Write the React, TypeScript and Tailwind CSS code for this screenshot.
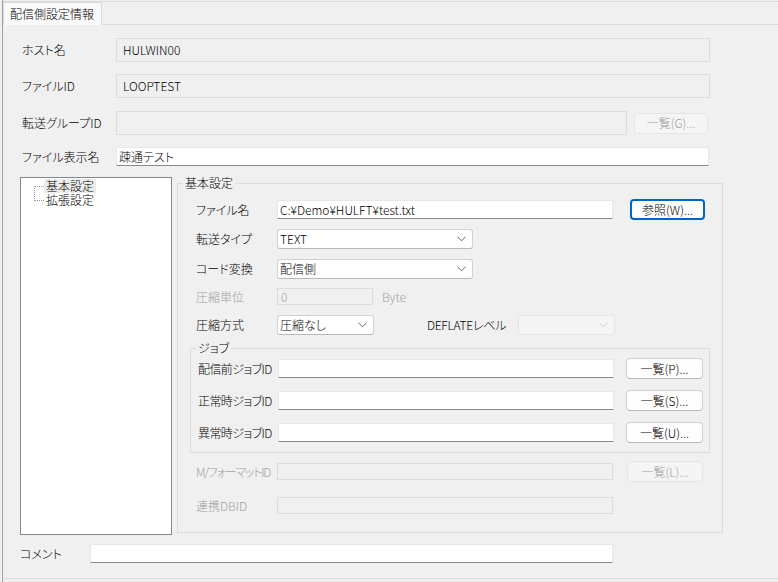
import type { ReactNode } from 'react'

interface FieldProps {
  value?: string
  w: string
  disabled?: boolean
}

// Edit box: white with dark bottom edge, or flat grey when disabled
function TextBox({ value = '', w, disabled = false }: FieldProps) {
  if (disabled) {
    return (
      <div className={`${w} h-[17px] shrink-0 bg-[#f0f0f0] border border-[#dcdcdc] pl-[3px] flex items-center text-[#a0a0a0] whitespace-nowrap`}>
        {value}
      </div>
    )
  }
  return (
    <div className={`${w} h-[19px] shrink-0 bg-white border border-[#e6e6e6] border-b-[#8a8a8a] rounded-t-[2px] pl-[2px] flex items-center whitespace-nowrap`}>
      {value}
    </div>
  )
}

function ReadOnlyBox({ value = '', w }: { value?: string; w: string }) {
  return (
    <div className={`${w} h-[24px] shrink-0 bg-[#f0f0f0] border border-[#dcdcdc] pl-[6px] flex items-center whitespace-nowrap`}>
      {value}
    </div>
  )
}

function Chevron({ disabled = false }: { disabled?: boolean }) {
  return (
    <svg width="9" height="6" viewBox="0 0 9 6" className="shrink-0">
      <polyline points="0.5,0.8 4.5,4.8 8.5,0.8" fill="none" stroke={disabled ? '#c8c8c8' : '#606060'} strokeWidth="1" />
    </svg>
  )
}

function Select({ value = '', w, disabled = false }: FieldProps) {
  return (
    <div
      className={`${w} h-[20px] shrink-0 rounded-[3px] border flex items-center justify-between pl-[2px] pr-[6px] whitespace-nowrap ${
        disabled ? 'bg-[#f5f5f5] border-[#e5e5e5]' : 'bg-white border-[#d0d0d0] border-b-[#b8b8b8]'
      }`}
    >
      <span>{value}</span>
      <Chevron disabled={disabled} />
    </div>
  )
}

interface BtnProps {
  children: ReactNode
  w: string
  disabled?: boolean
  focused?: boolean
}

function Btn({ children, w, disabled = false, focused = false }: BtnProps) {
  let tone = 'bg-[#fdfdfd] border border-[#d0d0d0] border-b-[#b5b5b5] text-black'
  if (focused) tone = 'bg-[#fdfdfd] border-2 border-[#0067c0] text-black'
  if (disabled) tone = 'bg-[#f5f5f5] border border-[#e5e5e5] text-[#a0a0a0]'
  return (
    <div className={`${w} h-[21px] rounded-[4px] flex items-center justify-center whitespace-nowrap shrink-0 ${tone}`}>
      {children}
    </div>
  )
}

function Label({ children, w, disabled = false }: { children: ReactNode; w: string; disabled?: boolean }) {
  return (
    <div className={`${w} shrink-0 whitespace-nowrap ${disabled ? 'text-[#a0a0a0]' : 'text-black'}`}>
      {children}
    </div>
  )
}

// Group box with caption sitting on the top border
function GroupBox({ title, className, children }: { title: string; className: string; children: ReactNode }) {
  return (
    <div className={`relative border border-[#dcdcdc] ${className}`}>
      <div className="absolute left-[5px] -top-[9px] px-[2px] bg-[#f0f0f0] leading-[16px]">{title}</div>
      {children}
    </div>
  )
}

function TreeView() {
  return (
    <div className="w-[152px] h-[358px] shrink-0 bg-white border border-[#828790] flex pl-[13px] pt-[1px]">
      <svg width="10" height="28" viewBox="0 0 10 28" className="shrink-0">
        <line x1="0.5" y1="7" x2="0.5" y2="22" stroke="#9a9a9a" strokeDasharray="1 1" />
        <line x1="1" y1="7.5" x2="10" y2="7.5" stroke="#9a9a9a" strokeDasharray="1 1" />
        <line x1="1" y1="21.5" x2="10" y2="21.5" stroke="#9a9a9a" strokeDasharray="1 1" />
      </svg>
      <div className="flex flex-col">
        <div className="h-[14px] px-[2px] bg-[#ececec] leading-[14px]">基本設定</div>
        <div className="h-[14px] px-[2px] leading-[14px]">拡張設定</div>
      </div>
    </div>
  )
}

export default function App() {
  return (
    <div className="w-[778px] h-[582px] overflow-hidden bg-[#f0f0f0] text-[12px] leading-[16px] font-light text-black font-['Noto_Sans_CJK_JP',sans-serif] [font-feature-settings:'palt']">
      <div className="ml-[2px] h-full border-l border-[#a0a0a0] flex flex-col">
        {/* Tab strip */}
        <div className="mt-[1px] h-[23px] border-t border-[#dadada] flex shrink-0">
          <div className="relative z-10 w-[99px] h-[23px] bg-[#f9f9f9] border-x border-t border-[#d9d9d9] pl-[6px] pt-[3px] whitespace-nowrap">
            配信側設定情報
          </div>
        </div>

        {/* Tab page */}
        <div className="h-[555px] border-t border-b border-[#dcdcdc] flex flex-col">
          <div className="mt-[13px] pl-[19px] flex items-center">
            <Label w="w-[94px]">ホスト名</Label>
            <ReadOnlyBox value="HULWIN00" w="w-[594px]" />
          </div>
          <div className="mt-[12px] pl-[19px] flex items-center">
            <Label w="w-[94px]">ファイルID</Label>
            <ReadOnlyBox value="LOOPTEST" w="w-[594px]" />
          </div>
          <div className="mt-[13px] pl-[19px] flex items-center">
            <Label w="w-[94px]">転送グループID</Label>
            <ReadOnlyBox w="w-[511px]" />
            <div className="ml-[7px]">
              <Btn w="w-[74px]" disabled>一覧(G)...</Btn>
            </div>
          </div>
          <div className="mt-[12px] pl-[19px] flex items-center">
            <Label w="w-[94px]">ファイル表示名</Label>
            <TextBox value="疎通テスト" w="w-[593px]" />
          </div>

          {/* Tree + settings */}
          <div className="mt-[11px] pl-[17px] flex items-start">
            <TreeView />
            <GroupBox title="基本設定" className="ml-[5px] mt-[6px] w-[546px] h-[350px]">
              <div className="mt-[15px] pl-[18px] h-[21px] flex items-center">
                <Label w="w-[81px]">ファイル名</Label>
                <TextBox value="C:¥Demo¥HULFT¥test.txt" w="w-[336px]" />
                <div className="ml-[17px]">
                  <Btn w="w-[75px]" focused>参照(W)...</Btn>
                </div>
              </div>
              <div className="mt-[9px] pl-[18px] flex items-center">
                <Label w="w-[81px]">転送タイプ</Label>
                <Select value="TEXT" w="w-[196px]" />
              </div>
              <div className="mt-[10px] pl-[18px] flex items-center">
                <Label w="w-[81px]">コード変換</Label>
                <Select value="配信側" w="w-[196px]" />
              </div>
              <div className="mt-[9px] pl-[18px] flex items-center">
                <Label w="w-[81px]" disabled>圧縮単位</Label>
                <TextBox value="0" w="w-[96px]" disabled />
                <div className="ml-[9px] text-[#a0a0a0]">Byte</div>
              </div>
              <div className="mt-[10px] pl-[18px] flex items-center">
                <Label w="w-[81px]">圧縮方式</Label>
                <Select value="圧縮なし" w="w-[97px]" />
                <Label w="w-[91px] ml-[53px] tracking-[-0.3px]">DEFLATEレベル</Label>
                <Select w="w-[97px]" disabled />
              </div>

              <GroupBox title="ジョブ" className="ml-[12px] mt-[13px] w-[520px] h-[105px]">
                <div className="mt-[9px] pl-[7px] flex items-center">
                  <Label w="w-[80px] tracking-[-0.6px]">配信前ジョブID</Label>
                  <TextBox w="w-[336px]" />
                  <div className="ml-[12px]">
                    <Btn w="w-[77px]">一覧(P)...</Btn>
                  </div>
                </div>
                <div className="mt-[11px] pl-[7px] flex items-center">
                  <Label w="w-[80px] tracking-[-0.6px]">正常時ジョブID</Label>
                  <TextBox w="w-[336px]" />
                  <div className="ml-[12px]">
                    <Btn w="w-[77px]">一覧(S)...</Btn>
                  </div>
                </div>
                <div className="mt-[11px] pl-[7px] flex items-center">
                  <Label w="w-[80px] tracking-[-0.6px]">異常時ジョブID</Label>
                  <TextBox w="w-[336px]" />
                  <div className="ml-[12px]">
                    <Btn w="w-[77px]">一覧(U)...</Btn>
                  </div>
                </div>
              </GroupBox>

              <div className="mt-[8px] pl-[18px] h-[21px] flex items-center">
                <Label w="w-[81px] tracking-[-1.2px]" disabled>M/フォーマットID</Label>
                <TextBox w="w-[336px]" disabled />
                <div className="ml-[14px]">
                  <Btn w="w-[76px]" disabled>一覧(L)...</Btn>
                </div>
              </div>
              <div className="mt-[15px] pl-[18px] flex items-center">
                <Label w="w-[81px]" disabled>連携DBID</Label>
                <TextBox w="w-[336px]" disabled />
              </div>
            </GroupBox>
          </div>

          <div className="mt-[9px] pl-[17px] flex items-center">
            <Label w="w-[70px]">コメント</Label>
            <TextBox w="w-[523px]" />
          </div>
        </div>
      </div>
    </div>
  )
}
